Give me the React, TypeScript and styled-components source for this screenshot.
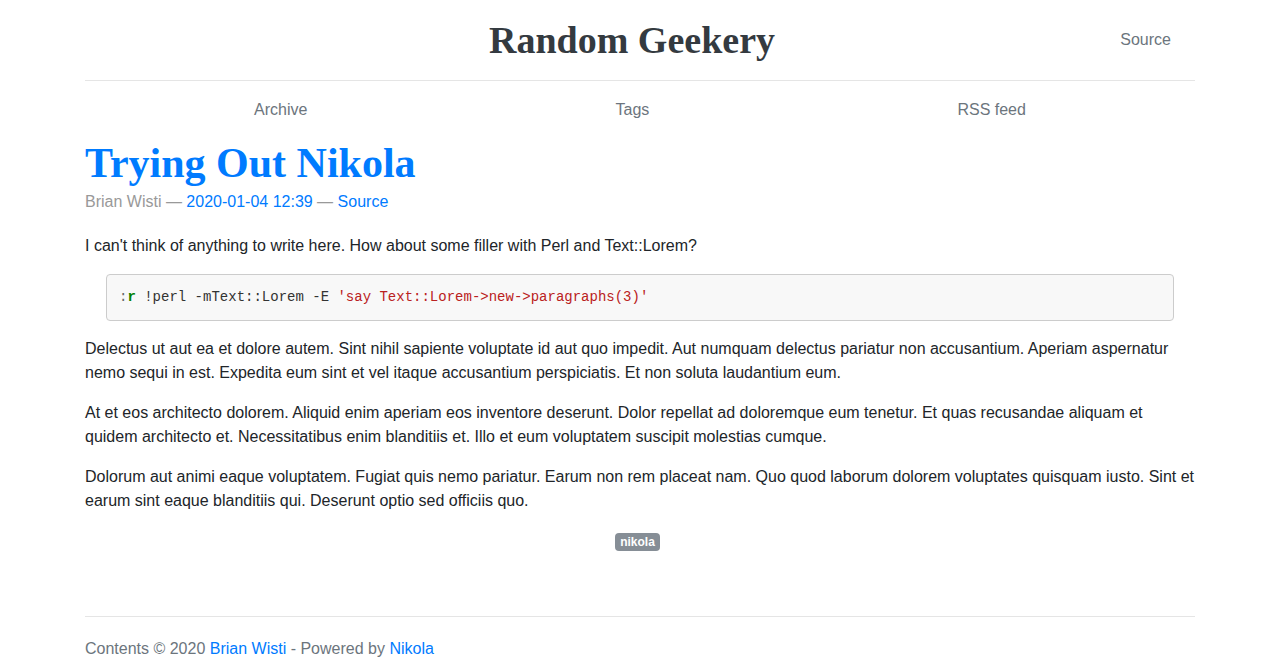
import styled, { createGlobalStyle } from "styled-components";

const GlobalStyle = createGlobalStyle`
  html, body {
    margin: 0;
    padding: 0;
    background: #fff;
  }
  body {
    font-family: "Liberation Sans", Arial, sans-serif;
    font-size: 16px;
    line-height: 1.5;
    color: #212529;
  }
  a {
    color: #007bff;
    text-decoration: none;
  }
`;

const Container = styled.div`
  width: 1110px;
  margin: 0 auto;
`;

const Header = styled.header`
  display: grid;
  grid-template-columns: 1fr auto 1fr;
  align-items: center;
  height: 80px;
  border-bottom: 1px solid #e5e5e5;
`;

const BlogTitle = styled.a`
  grid-column: 2;
  margin-right: 16px;
  font-family: "Liberation Serif", "Times New Roman", serif;
  font-weight: 700;
  font-size: 38px;
  line-height: 1;
  color: #343a40;
`;

const HeaderLink = styled.a`
  justify-self: end;
  padding-right: 24px;
  color: #6c757d;
`;

const Nav = styled.nav`
  display: flex;
  justify-content: space-around;
  padding: 9px 15px 0;
  height: 47px;
`;

const NavLink = styled.a`
  padding: 8px;
  color: #6c757d;
  line-height: 24px;
`;

const PostTitle = styled.h1`
  margin: 2px 0 3px;
  font-family: "Liberation Serif", "Times New Roman", serif;
  font-weight: 700;
  font-size: 42px;
  line-height: 48px;
  color: #007bff;
`;

const Meta = styled.p`
  margin: 0 0 20px;
  color: #999;
`;

const Para = styled.p`
  margin: 0 0 16px;
`;

const Code = styled.pre`
  margin: 0 21px 16px;
  padding: 12px;
  background: #f8f8f8;
  border: 1px solid #ccc;
  border-radius: 4px;
  font-family: "Liberation Mono", "Courier New", monospace;
  font-size: 14px;
  line-height: 21px;
  color: #333;
`;

const Tok = styled.span<{ $kind: "op" | "kw" | "str" }>`
  color: ${(p) =>
    p.$kind === "kw" ? "#008000" : p.$kind === "str" ? "#ba2121" : "#666"};
  font-weight: ${(p) => (p.$kind === "kw" ? 700 : 400)};
`;

const Tags = styled.div`
  display: flex;
  justify-content: center;
  padding: 4px 5px 0 0;
  height: 83px;
`;

const Tag = styled.span`
  align-self: flex-start;
  background: #868e96;
  color: #fff;
  font-size: 12px;
  font-weight: 700;
  line-height: 12px;
  padding: 3px 5px;
  border-radius: 4px;
`;

const Footer = styled.footer`
  border-top: 1px solid #e5e5e5;
  padding-top: 20px;
  color: #6c757d;
`;

export default function App() {
  return (
    <>
      <GlobalStyle />
      <Container>
        <Header>
          <BlogTitle href="#">Random Geekery</BlogTitle>
          <HeaderLink href="#">Source</HeaderLink>
        </Header>
        <Nav>
          <NavLink href="#">Archive</NavLink>
          <NavLink href="#">Tags</NavLink>
          <NavLink href="#">RSS feed</NavLink>
        </Nav>
        <article>
          <PostTitle>Trying Out Nikola</PostTitle>
          <Meta>
            Brian Wisti — <a href="#">2020-01-04 12:39</a> —{" "}
            <a href="#">Source</a>
          </Meta>
          <Para>
            I can't think of anything to write here. How about some filler with
            Perl and Text::Lorem?
          </Para>
          <Code>
            <Tok $kind="op">:</Tok>
            <Tok $kind="kw">r</Tok> !perl -mText::Lorem -E{" "}
            <Tok $kind="str">'say Text::Lorem-&gt;new-&gt;paragraphs(3)'</Tok>
          </Code>
          <Para>
            Delectus ut aut ea et dolore autem. Sint nihil sapiente voluptate id
            aut quo impedit. Aut numquam delectus pariatur non accusantium.
            Aperiam aspernatur nemo sequi in est. Expedita eum sint et vel itaque
            accusantium perspiciatis. Et non soluta laudantium eum.
          </Para>
          <Para>
            At et eos architecto dolorem. Aliquid enim aperiam eos inventore
            deserunt. Dolor repellat ad doloremque eum tenetur. Et quas
            recusandae aliquam et quidem architecto et. Necessitatibus enim
            blanditiis et. Illo et eum voluptatem suscipit molestias cumque.
          </Para>
          <Para>
            Dolorum aut animi eaque voluptatem. Fugiat quis nemo pariatur. Earum
            non rem placeat nam. Quo quod laborum dolorem voluptates quisquam
            iusto. Sint et earum sint eaque blanditiis qui. Deserunt optio sed
            officiis quo.
          </Para>
          <Tags>
            <Tag>nikola</Tag>
          </Tags>
        </article>
        <Footer>
          Contents © 2020 <a href="#">Brian Wisti</a> - Powered by{" "}
          <a href="#">Nikola</a>
        </Footer>
      </Container>
    </>
  );
}
